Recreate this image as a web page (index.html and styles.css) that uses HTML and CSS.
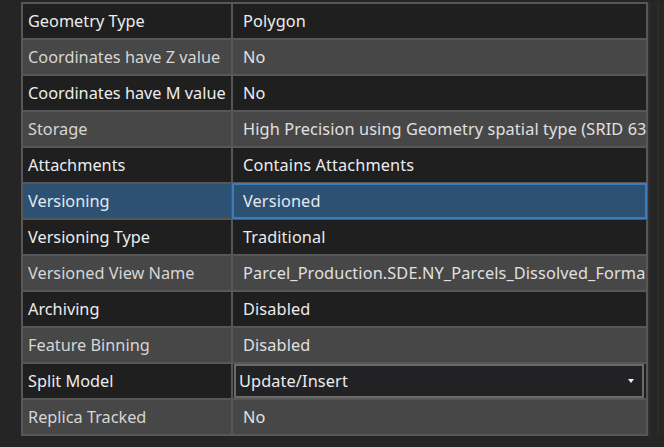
FILE: index.html
```html
<!DOCTYPE html>
<html>
<head>
<meta charset="utf-8">
<link rel="stylesheet" href="styles.css">
</head>
<body>
<div class="pane">
  <div class="grid">
    <div class="row dark"><div class="k">Geometry Type</div><div class="v">Polygon</div></div>
    <div class="row light"><div class="k">Coordinates have Z value</div><div class="v">No</div></div>
    <div class="row dark"><div class="k">Coordinates have M value</div><div class="v">No</div></div>
    <div class="row light"><div class="k">Storage</div><div class="v">High Precision using Geometry spatial type (SRID 6318)</div></div>
    <div class="row dark"><div class="k">Attachments</div><div class="v">Contains Attachments</div></div>
    <div class="row selected"><div class="k">Versioning</div><div class="v">Versioned</div></div>
    <div class="row dark"><div class="k">Versioning Type</div><div class="v">Traditional</div></div>
    <div class="row light"><div class="k">Versioned View Name</div><div class="v">Parcel_Production.SDE.NY_Parcels_Dissolved_Formatted_evw</div></div>
    <div class="row dark"><div class="k">Archiving</div><div class="v">Disabled</div></div>
    <div class="row light"><div class="k">Feature Binning</div><div class="v">Disabled</div></div>
    <div class="row dark"><div class="k">Split Model</div><div class="v combo-cell"><div class="combo"><span>Update/Insert</span><span class="arrow"></span></div></div></div>
    <div class="row light"><div class="k">Replica Tracked</div><div class="v">No</div></div>
  </div>
  <div class="scroll"><div class="scroll-line"></div></div>
</div>
</body>
</html>
```
FILE: styles.css
```css
html, body {
  margin: 0;
  padding: 0;
  background: #252525;
  height: 100%;
  overflow: hidden;
}
body {
  font-family: "Noto Sans", "Open Sans", sans-serif;
  font-size: 16.3px;
  color: #e8e8e8;
}
.pane {
  display: flex;
  align-items: flex-start;
  padding-left: 21px;
  padding-top: 2px;
}
.grid {
  display: grid;
  grid-template-columns: 208px 413px;
  grid-auto-rows: 34px;
  gap: 2px;
  padding: 2px;
  background: #575757;
}
.row {
  display: contents;
}
.k, .v {
  display: flex;
  align-items: center;
  white-space: nowrap;
  overflow: hidden;
}
.k {
  padding-left: 5px;
}
.v {
  padding-left: 10px;
  letter-spacing: 0.12px;
}
.dark .k, .dark .v {
  background: #1f1f1f;
  color: #ececec;
}
.light .k, .light .v {
  background: #474747;
  color: #e0e0e0;
}
.light .k {
  color: #d6d6d6;
}
.selected .k, .selected .v {
  background: #2c5173;
  color: #e4e8ee;
}
.selected .v {
  outline: 2px solid #3c7cbb;
  outline-offset: -1px;
  position: relative;
}
.v.combo-cell {
  padding: 0 2px 0 1px;
  align-items: stretch;
}
.combo {
  flex: 1;
  display: flex;
  align-items: center;
  justify-content: space-between;
  border: 2px solid #6a6a6a;
  background: #222224;
  padding: 0 8px 0 3px;
}
.arrow {
  width: 0;
  height: 0;
  border-left: 3px solid transparent;
  border-right: 3px solid transparent;
  border-top: 4px solid #f2f2f2;
}
.scroll {
  width: 16px;
  height: 435px;
  display: flex;
  background: #262626;
  border-left: 2px solid #2e2e2e;
}
.scroll-line {
  margin-left: 7px;
  width: 2px;
  background: #2b2b2b;
}
```
